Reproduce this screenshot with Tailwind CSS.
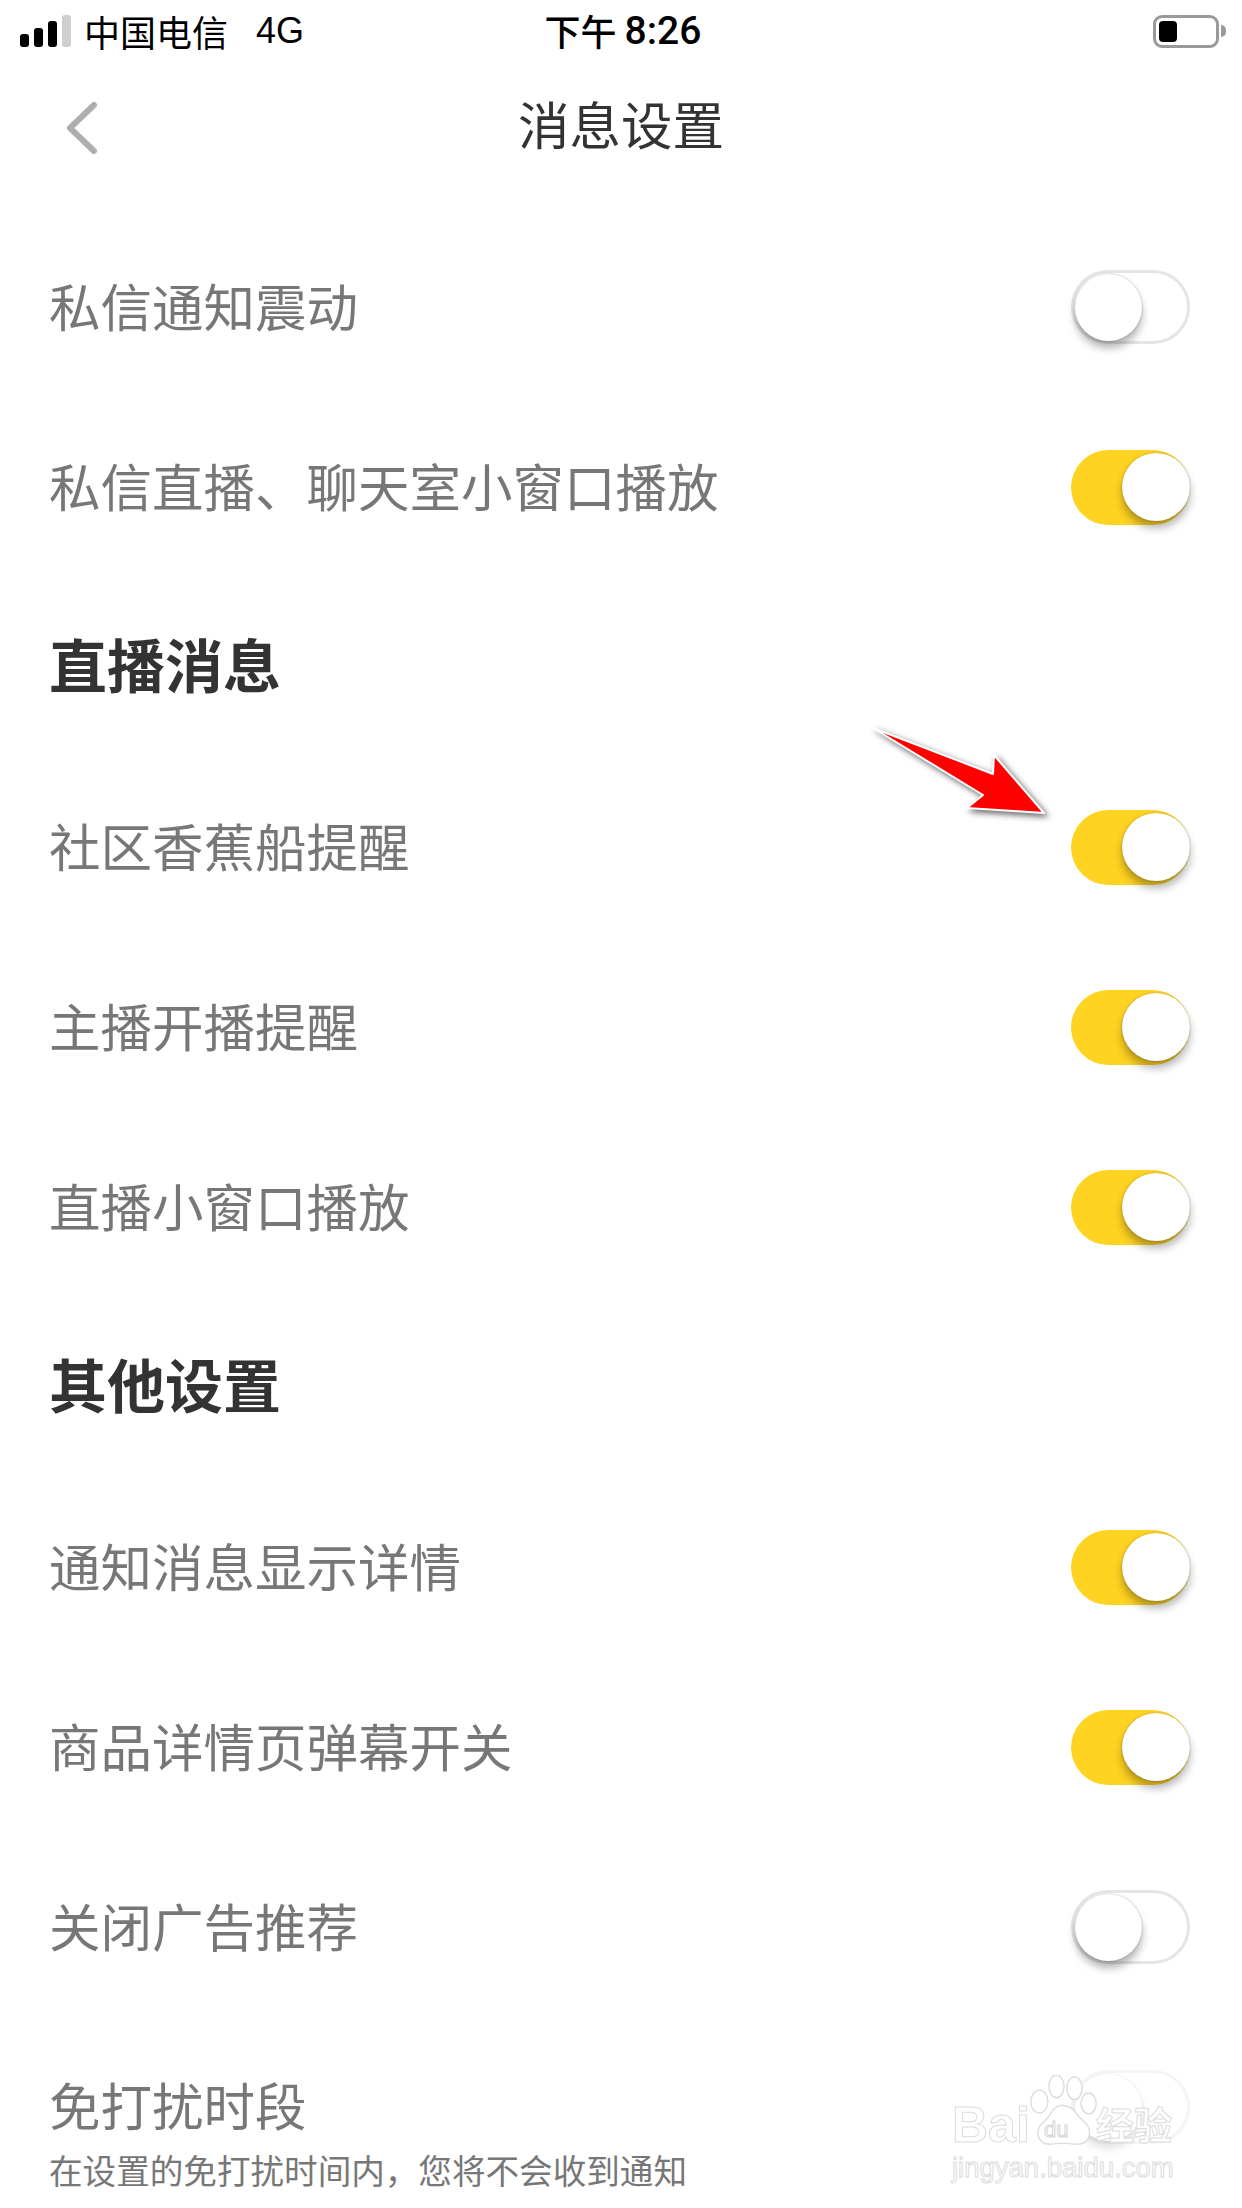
<!DOCTYPE html>
<html lang="zh-CN">

<head>
  <meta charset="UTF-8" />
  <meta name="viewport" content="width=device-width, initial-scale=1" />
  <script src="https://cdn.jsdelivr.net/npm/@tailwindcss/browser@4"></script>
  <title>消息设置</title>
</head>

<body class="bg-white w-[1242px] h-[2208px] overflow-hidden relative font-['Noto_Sans_CJK_SC',sans-serif]">
  <!-- status bar -->
  <div class="h-[62px] pl-[20px] pr-[16px] flex items-center justify-between text-black">
    <div class="flex items-center w-[400px]">
      <div class="flex items-end gap-[5px] h-[32px]">
        <div class="w-[9px] h-[13px] rounded-[3px] bg-black"></div>
        <div class="w-[9px] h-[19px] rounded-[3px] bg-black"></div>
        <div class="w-[9px] h-[26px] rounded-[3px] bg-black"></div>
        <div class="w-[9px] h-[32px] rounded-[3px] bg-[#cfcfcf]"></div>
      </div>
      <span class="ml-[13px] text-[36px] leading-none">中国电信</span>
      <span class="ml-[28px] text-[36px] leading-none font-['Liberation_Sans',sans-serif]">4G</span>
    </div>
    <div class="flex items-center gap-[8px] leading-none">
      <span class="text-[36px] font-medium pb-[3px]">下午</span>
      <span class="text-[39px] font-medium font-['Roboto',sans-serif]">8:26</span>
    </div>
    <div class="w-[400px] flex justify-end items-center">
      <div class="w-[66px] h-[33px] rounded-[9px] border-[3px] border-[#999] p-[3px]">
        <div class="w-[18px] h-full rounded-[4px] bg-black"></div>
      </div>
      <div class="w-[5px] h-[12px] ml-[2px] rounded-r-full bg-[#999]"></div>
    </div>
  </div>

  <!-- nav -->
  <div class="h-[126px] relative flex items-center justify-center">
    <svg class="absolute left-[64px] top-[38px]" width="36" height="56" viewBox="0 0 36 56" fill="none">
      <path d="M30 5 L6 28 L30 51" stroke="#aeaeae" stroke-width="6" stroke-linecap="round" stroke-linejoin="round" />
    </svg>
    <h1 class="text-[51.5px] leading-none text-[#333] pb-[4px]">消息设置</h1>
  </div>

  <div class="pt-[29px] pl-[49px] pr-[52px] text-[#777] text-[51.5px]">
    <div class="h-[180px] flex items-center justify-between">
      <span class="pb-[4px]">私信通知震动</span>
      <div class="w-[119px] h-[74px] rounded-full border-[3px] border-[#e5e5e5] flex items-center pl-[1px]">
        <div class="w-[67px] h-[67px] rounded-full bg-white shadow-[0_7px_9px_rgba(0,0,0,0.3),0_0_2px_rgba(0,0,0,0.3)]"></div>
      </div>
    </div>
    <div class="h-[180px] flex items-center justify-between">
      <span class="pb-[4px]">私信直播、聊天室小窗口播放</span>
      <div class="w-[119px] h-[75px] rounded-full bg-[#ffd322] flex items-center justify-end">
        <div class="w-[68px] h-[68px] rounded-full bg-white shadow-[0_7px_9px_rgba(0,0,0,0.3),0_0_2px_rgba(0,0,0,0.3)]"></div>
      </div>
    </div>

    <div class="h-[180px] flex items-center text-[58px] font-semibold text-[#333] pb-[8px]">直播消息</div>

    <div class="h-[180px] flex items-center justify-between">
      <span class="pb-[4px]">社区香蕉船提醒</span>
      <div class="w-[119px] h-[75px] rounded-full bg-[#ffd322] flex items-center justify-end">
        <div class="w-[68px] h-[68px] rounded-full bg-white shadow-[0_7px_9px_rgba(0,0,0,0.3),0_0_2px_rgba(0,0,0,0.3)]"></div>
      </div>
    </div>
    <div class="h-[180px] flex items-center justify-between">
      <span class="pb-[4px]">主播开播提醒</span>
      <div class="w-[119px] h-[75px] rounded-full bg-[#ffd322] flex items-center justify-end">
        <div class="w-[68px] h-[68px] rounded-full bg-white shadow-[0_7px_9px_rgba(0,0,0,0.3),0_0_2px_rgba(0,0,0,0.3)]"></div>
      </div>
    </div>
    <div class="h-[180px] flex items-center justify-between">
      <span class="pb-[4px]">直播小窗口播放</span>
      <div class="w-[119px] h-[75px] rounded-full bg-[#ffd322] flex items-center justify-end">
        <div class="w-[68px] h-[68px] rounded-full bg-white shadow-[0_7px_9px_rgba(0,0,0,0.3),0_0_2px_rgba(0,0,0,0.3)]"></div>
      </div>
    </div>

    <div class="h-[180px] flex items-center text-[58px] font-semibold text-[#333] pb-[8px]">其他设置</div>

    <div class="h-[180px] flex items-center justify-between">
      <span class="pb-[4px]">通知消息显示详情</span>
      <div class="w-[119px] h-[75px] rounded-full bg-[#ffd322] flex items-center justify-end">
        <div class="w-[68px] h-[68px] rounded-full bg-white shadow-[0_7px_9px_rgba(0,0,0,0.3),0_0_2px_rgba(0,0,0,0.3)]"></div>
      </div>
    </div>
    <div class="h-[180px] flex items-center justify-between">
      <span class="pb-[4px]">商品详情页弹幕开关</span>
      <div class="w-[119px] h-[75px] rounded-full bg-[#ffd322] flex items-center justify-end">
        <div class="w-[68px] h-[68px] rounded-full bg-white shadow-[0_7px_9px_rgba(0,0,0,0.3),0_0_2px_rgba(0,0,0,0.3)]"></div>
      </div>
    </div>
    <div class="h-[180px] flex items-center justify-between">
      <span class="pb-[4px]">关闭广告推荐</span>
      <div class="w-[119px] h-[74px] rounded-full border-[3px] border-[#e5e5e5] flex items-center pl-[1px]">
        <div class="w-[67px] h-[67px] rounded-full bg-white shadow-[0_7px_9px_rgba(0,0,0,0.3),0_0_2px_rgba(0,0,0,0.3)]"></div>
      </div>
    </div>
    <div class="h-[180px] flex items-center justify-between">
      <div class="pt-[50px]">
        <div class="leading-[64px]">免打扰时段</div>
        <div class="text-[33.6px] leading-[46px] mt-[11px] text-[#777]">在设置的免打扰时间内，您将不会收到通知</div>
      </div>
      <div class="w-[119px] h-[74px] rounded-full border-[3px] border-[#e5e5e5] flex items-center pl-[1px]">
        <div class="w-[67px] h-[67px] rounded-full bg-white shadow-[0_7px_9px_rgba(0,0,0,0.3),0_0_2px_rgba(0,0,0,0.3)]"></div>
      </div>
    </div>
  </div>

  <!-- annotation arrow -->
  <svg class="absolute left-[860px] top-[710px] drop-shadow-[3px_3px_3px_rgba(0,0,0,0.6)]" width="200" height="120" viewBox="860 710 200 120">
    <path d="M873 728 L993 774 L994 755 L1044 813 L967 808 L983 795 Z" fill="#ff0000" stroke="#fff" stroke-width="2" stroke-linejoin="round" />
  </svg>

  <!-- watermark -->
  <div class="absolute left-[950px] top-[2070px] w-[240px] h-[120px] bg-white/60">
    <div class="absolute left-[2px] top-[30px] text-[50px] leading-none font-bold text-white [-webkit-text-stroke:1px_#dcdcdc] font-['Liberation_Sans',sans-serif]">Bai</div>
    <svg class="absolute left-[78px] top-[5px]" width="72" height="72" viewBox="0 0 72 76" fill="#fff" stroke="#dcdcdc" stroke-width="1.5">
      <ellipse cx="10" cy="28" rx="9" ry="12" />
      <ellipse cx="28" cy="12" rx="8" ry="12" />
      <ellipse cx="47" cy="14" rx="8" ry="12" />
      <ellipse cx="62" cy="30" rx="8" ry="11" />
      <path d="M34 32 C24 32 22 44 14 50 C4 58 8 74 22 73 C30 72 40 72 48 73 C64 74 68 58 56 48 C48 42 46 32 34 32 Z" />
    </svg>
    <div class="absolute left-[94px] top-[49px] text-[22px] leading-none text-white [-webkit-text-stroke:1px_#d5d5d5] font-['Liberation_Sans',sans-serif]">du</div>
    <div class="absolute left-[146px] top-[34px] text-[38px] leading-none font-bold text-white [-webkit-text-stroke:1px_#dcdcdc]">经验</div>
    <div class="absolute left-[2px] top-[84px] text-[27.5px] leading-none text-white [-webkit-text-stroke:1px_#dcdcdc] font-['Liberation_Sans',sans-serif]">jingyan.baidu.com</div>
  </div>
</body>

</html>
